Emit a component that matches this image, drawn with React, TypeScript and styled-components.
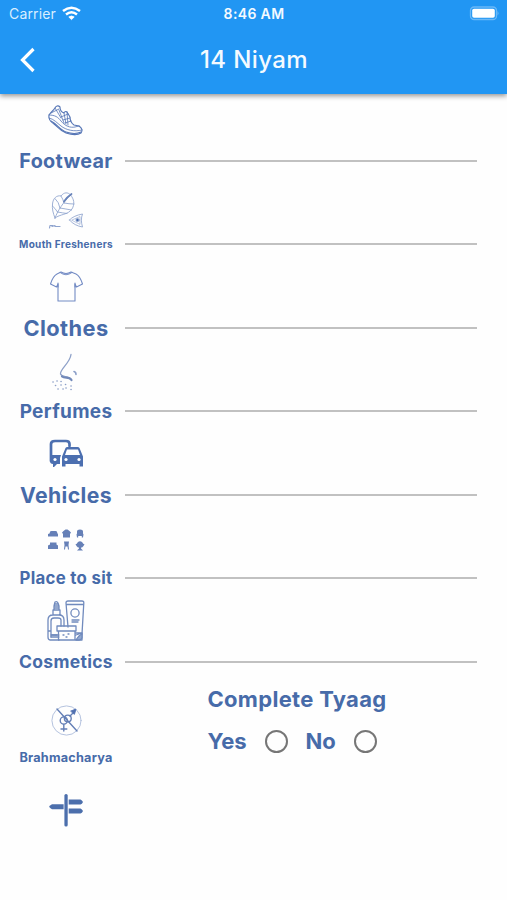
import React from "react";
import styled, { createGlobalStyle } from "styled-components";

const Global = createGlobalStyle`
  * { box-sizing: border-box; }
  body { margin: 0; background: #fff; font-family: Inter, "Liberation Sans", sans-serif; overflow: hidden; }
`;

const Screen = styled.div`
  width: 507px;
  height: 900px;
  background: #fefefe;
  overflow: hidden;
`;

const Header = styled.header`
  height: 94px;
  background: #2196f3;
  color: #f4faff;
  box-shadow: 0 2px 5px rgba(0, 0, 0, 0.42);
`;

const StatusBar = styled.div`
  height: 27px;
  display: grid;
  grid-template-columns: 1fr auto 1fr;
  align-items: center;
  padding: 0 8px 0 9px;
`;

const Carrier = styled.div`
  display: flex;
  align-items: center;
  gap: 6px;
  font-size: 14px;
  letter-spacing: 0.15px;
  color: #d9eeff;
`;

const Clock = styled.div`
  font-size: 14px;
  font-weight: 600;
  letter-spacing: 0.35px;
`;

const BatterySlot = styled.div`
  display: flex;
  justify-content: flex-end;
`;

const NavBar = styled.div`
  height: 66px;
  display: grid;
  grid-template-columns: 60px 1fr 60px;
  align-items: center;
`;

const BackButton = styled.button`
  display: flex;
  padding: 0 0 0 19px;
  border: 0;
  background: none;
`;

const Title = styled.h1`
  margin: 0;
  padding-left: 1px;
  text-align: center;
  font-size: 24px;
  line-height: 28px;
  font-weight: 500;
  letter-spacing: 0.4px;
`;

const List = styled.main`
  padding: 6px 30px 0 19px;
`;

const Row = styled.div`
  height: 83.5px;
  display: grid;
  grid-template-columns: 94px 1fr;
  grid-template-rows: 40px 41px;
  column-gap: 12px;
  align-items: center;
`;

const IconSlot = styled.div`
  grid-column: 1 / 3;
  width: 94px;
  height: 40px;
  display: flex;
  justify-content: center;
  align-items: center;
`;

const Label = styled.div<{ $size: number; $spacing?: number }>`
  display: flex;
  justify-content: center;
  white-space: nowrap;
  font-size: ${(p) => p.$size}px;
  letter-spacing: ${(p) => p.$spacing ?? 0.3}px;
  font-weight: 650;
  color: #476ba9;
`;

const Underline = styled.div`
  height: 2px;
  background: #c1c1c1;
`;

const ChoiceRow = styled.div`
  height: 105px;
  display: grid;
  grid-template-columns: 94px 1fr;
  column-gap: 94.5px;
`;

const ChoiceLabel = styled.div`
  display: flex;
  flex-direction: column;
  gap: 10px;
  padding-top: 15px;
`;

const Choices = styled.div`
  display: flex;
  flex-direction: column;
  align-items: flex-start;
  color: #476ba9;
  font-weight: 650;
  font-size: 22px;
`;

const ChoiceTitle = styled.div`
  height: 29px;
  line-height: 29px;
  letter-spacing: 0.3px;
  white-space: nowrap;
`;

const Options = styled.div`
  height: 55px;
  display: flex;
  align-items: center;
`;

const OptionText = styled.span<{ $width: number }>`
  width: ${(p) => p.$width}px;
`;

const Radio = styled.span`
  width: 23px;
  height: 23px;
  margin-right: 18px;
  border: 2.5px solid #767676;
  border-radius: 50%;
`;

const Picture = styled.svg`
  overflow: visible;
  flex: none;
`;

const Drawing = ({ children, w = 1, h = 40 }: { children: React.ReactNode; w?: number; h?: number }) => (
  <Picture width={40} height={h} viewBox={`0 0 40 ${h}`} fill="none" stroke="#5575b5" strokeWidth={w} strokeLinecap="round" strokeLinejoin="round">
    {children}
  </Picture>
);

const Shoe = () => (
  <Drawing w={1.1}>
    <path d="M3 15C2 19 5 22 8 24C12 27 14 31 20 33C26 35 32 35 35 33C37 31 36 28 33 26L28 25C25 23 24 20 24 17L21 12C20 11 18 12 18 13C15 12 14 10 14 7C12 5 10 6 9 8C7 11 5 12 3 15Z" />
    <path d="M3 18C8 19 11 23 15 26C20 30 28 32 36 30M3 15C9 15 12 17 15 21C19 26 24 28 29 27L33 26M5 13L13 9M9 8L15 18M13 10L18 23M18 13L20 24M21 12L22 25M15 17L22 14M17 20L24 18M19 23L25 21" strokeWidth={0.8} />
    <path d="M5 21C11 24 14 30 20 32C26 34 31 34 35 32" />
  </Drawing>
);

const Leaf = () => (
  <Drawing w={0.85}>
    <g stroke="#8ea3ce">
      <path d="M9 34C7 29 6 25 6.5 20C7 14 11 11 15 12C18 8 22 8 24.5 11C28 15 29 20 26 25C22 31 14 30 9 34Z" />
      <path d="M9 34C12 26 17 19 24 11.5M11.5 28Q9 24 6.5 22M14 24Q13 18 9 14.5M18 19Q17 15 15 12M11.5 28Q17 29 21 29.5M14 24Q20 25 25.5 26M18 19Q23 20 28 20" />
      <path d="M18 17.5Q21 13 25.5 10" stroke="#6782b9" strokeWidth="1.8" />
      <path d="M23.5 36C26 33 31 31 36.5 30C35 34 35 38 36.5 43C31 42 27 40 23.5 36Z" />
      <path d="M26 36L34 32.5V40Z" strokeWidth="0.6" />
      <circle cx="31.5" cy="36" r="1.6" fill="#486caf" />
      <path d="M3.5 44L4 41.5H7M6 42.5L9 41.5M9 42.5H14" strokeWidth="1.2" />
    </g>
  </Drawing>
);

const Shirt = () => (
  <Drawing w={1.1}>
    <g stroke="#738bc4">
      <path d="M15 5Q20 8 25 5L30 7Q34 9 36.5 17L30.5 20L29 17V34H12V17L10.5 20L4.5 17Q7 9 11 7L15 5Z" />
      <path d="M14 5.4Q20 10 26 5.4M12 16V20M29 16V20" />
    </g>
  </Drawing>
);

const Nose = () => (
  <Drawing w={1.3}>
    <g stroke="#8da0c8">
      <path d="M25 3.5C24 12 14 18 14.5 23C16 27 23 24 25.5 29" />
      <path d="M16 25.5C19 28 23 25 25.5 29" stroke="#7188b8" strokeWidth="2.2" />
      <path d="M28 20.5Q30 21 30 23.5" strokeWidth="1.6" />
      <path d="M7 31h.1M11 30h.1M15 30.5h.1M9.5 34.5h.1M15 34h.1M19.5 33.5h.1M12 38h.1M17 38h.1M20 37h.1M25 35h.1M25 38.5h.1" strokeWidth="1.6" />
    </g>
  </Drawing>
);

const Vehicles = () => (
  <Drawing w={2.7}>
    <path d="M5 27V10Q5 7 9 7H20Q23.5 7 23.5 10V12" stroke="#4c6fb0" />
    <path d="M4 21H15L14 24V30H11L8 33H7V30Q4 30 4 27Z" fill="#4c6fb0" stroke="none" />
    <path d="M16 22.5L19.5 14Q20 13 21.5 13H31.5Q33 13 33.5 14L37 22.5V32.5H33.5V30H19.5V32.5H16Z" fill="#4c6fb0" stroke="none" />
    <path d="M19 21L21 15.5H32L34 21Z" fill="#fff" stroke="none" />
    <circle cx="20" cy="25.5" r="1.6" fill="#fff" stroke="none" />
    <circle cx="33" cy="25.5" r="1.6" fill="#fff" stroke="none" />
    <circle cx="9" cy="25.5" r="1.6" fill="#fff" stroke="none" />
  </Drawing>
);

const Seats = () => (
  <Drawing w={1}>
    <g fill="#6680b7" stroke="none">
      <path d="M4 14Q4 13 5.5 13H9.5Q11 13 11 14L11.5 15.5L12 16V18.5H2V16L3.5 15.5Z" />
      <path d="M17.5 13L19.5 11.5H21.5L23.5 13L25 14.5L24 16V19.5H17V16L16 14.5Z" />
      <path d="M31 13.5Q31 11.5 34 11.5Q37 11.5 37 13.5V15.5L37.5 16.5L37 19.5H35.8V18H32.2V19.5H31L30.5 16.5L31 15.5Z" />
      <path d="M4 24.5H10.5V26.5L12 27.5V31H2V27.5L4 26.5Z" />
      <path d="M18 23.5H23L22.5 27L23 31.5H22L21.5 28.5H19.5L19 31.5H18L18.5 27Z" />
      <path d="M32 24Q34 22.5 36 24L37.5 26H38.5L37.5 28L36 29.5H35V30.5L37 32.5H31L33 30.5V29.5H32L30.5 28L29.5 26H30.5Z" />
    </g>
  </Drawing>
);

const Cosmetics = () => (
  <Drawing w={1.3} h={42}>
    <g stroke="#708abd">
      <path d="M22 27L20 3Q20 1 22 1H36Q38 1 37.8 3L36 34M21 4.5H37.5M7 15V10H14V15M8 10V6L9 2Q11 1 12 3L13 6V10M8 6H13M9 4H12M9 8H13M13 40H4Q2 40 2 37V20Q2 15 7 15H13Q18 15 18 20V26M5 37V21Q5 18 8 18H12Q15 18 15 20V26M5 35H11M2 31H5" />
      <circle cx="29" cy="13" r="4.1" />
      <path d="M11 26H30V31H11ZM12.5 31V40H29V31M30 33H36V40H29M5 35H13M5 37H13M26 20H33M26 22H32M17 35H18M22 34H23M20 37H21M30 35L36 33" />
      <path d="M30 40Q33 35 36 34V38Q35 40 33 40Z" fill="#91a8cf" />
    </g>
  </Drawing>
);

const Celibacy = () => (
  <Drawing w={1}>
    <circle cx="20.5" cy="20.5" r="14.6" stroke="#b5c3df" />
    <g stroke="#647fb6" strokeWidth="1.4">
      <circle cx="17.8" cy="20.5" r="3.6" />
      <circle cx="21.8" cy="18.5" r="3.4" />
      <path d="M17.8 24.5V31M15 29H20.8M24 16L28 12M11 9L31 31" />
    </g>
    <path d="M25 11L30 9L28.5 14Z" fill="#506fae" />
  </Drawing>
);

const Signpost = () => (
  <Drawing>
    <g fill="#4c6fac" stroke="none">
      <rect x="18.4" y="4" width="3.3" height="32.5" rx="1.6" />
      <path d="M17.6 14.2H6Q4.5 15 3 16.7Q4.5 18.5 6 19.2H17.6Z" />
      <path d="M22.7 9.5H34.5Q36 10 37 12Q36 14 34.5 14.5H22.7Z" />
      <path d="M22.7 18.5H34.5Q36 19 37 21Q36 23 34.5 23.5H22.7Z" />
    </g>
  </Drawing>
);

const Wifi = () => (
  <svg width="19" height="15" viewBox="0 0 19 15" fill="none" stroke="#fff" strokeWidth="2.5">
    <path d="M1 5Q9.5 -1.6 18 5M4 8.5Q9.5 4 15 8.5" />
    <path d="M6.8 11Q9.5 9 12.2 11L9.5 13.6Z" fill="#fff" stroke="#fff" strokeWidth="0.8" />
  </svg>
);

const Battery = () => (
  <svg width="31" height="15" viewBox="0 0 31 15">
    <rect x="2.5" y="1" width="26" height="12.5" rx="3.6" fill="none" stroke="#6ab8f7" strokeWidth="1.3" />
    <rect x="4.2" y="2.8" width="22.6" height="9" rx="1.8" fill="#fff" />
    <path d="M29.5 5Q31.5 7.2 29.5 9.5Z" fill="#6ab8f7" />
  </svg>
);

const items = [
  { name: "Footwear", size: 19.8, spacing: 0.3, Icon: Shoe },
  { name: "Mouth Fresheners", size: 10, spacing: 0.3, Icon: Leaf },
  { name: "Clothes", size: 21.8, spacing: 0.4, Icon: Shirt },
  { name: "Perfumes", size: 19, spacing: 0.3, Icon: Nose },
  { name: "Vehicles", size: 21.2, spacing: 0.4, Icon: Vehicles },
  { name: "Place to sit", size: 16.8, spacing: 0.3, Icon: Seats },
  { name: "Cosmetics", size: 17.5, spacing: 0.3, Icon: Cosmetics },
];

export default function App() {
  return (
    <>
      <Global />
      <Screen>
        <Header>
          <StatusBar>
            <Carrier>Carrier <Wifi /></Carrier>
            <Clock>8:46 AM</Clock>
            <BatterySlot><Battery /></BatterySlot>
          </StatusBar>
          <NavBar>
            <BackButton aria-label="Back">
              <svg width="18" height="26" viewBox="0 0 18 26" fill="none" stroke="#fff" strokeWidth="3.2">
                <path d="M14.5 2L3.5 13L14.5 24" />
              </svg>
            </BackButton>
            <Title>14 Niyam</Title>
          </NavBar>
        </Header>
        <List>
          {items.map(({ name, size, spacing, Icon }) => (
            <Row key={name}>
              <IconSlot><Icon /></IconSlot>
              <Label $size={size} $spacing={spacing}>{name}</Label>
              <Underline />
            </Row>
          ))}
          <ChoiceRow>
            <ChoiceLabel>
              <IconSlot><Celibacy /></IconSlot>
              <Label $size={12.7} $spacing={0.2}>Brahmacharya</Label>
            </ChoiceLabel>
            <Choices>
              <ChoiceTitle>Complete Tyaag</ChoiceTitle>
              <Options>
                <OptionText $width={57}>Yes</OptionText>
                <Radio />
                <OptionText $width={48}>No</OptionText>
                <Radio />
              </Options>
            </Choices>
          </ChoiceRow>
          <IconSlot><Signpost /></IconSlot>
        </List>
      </Screen>
    </>
  );
}
